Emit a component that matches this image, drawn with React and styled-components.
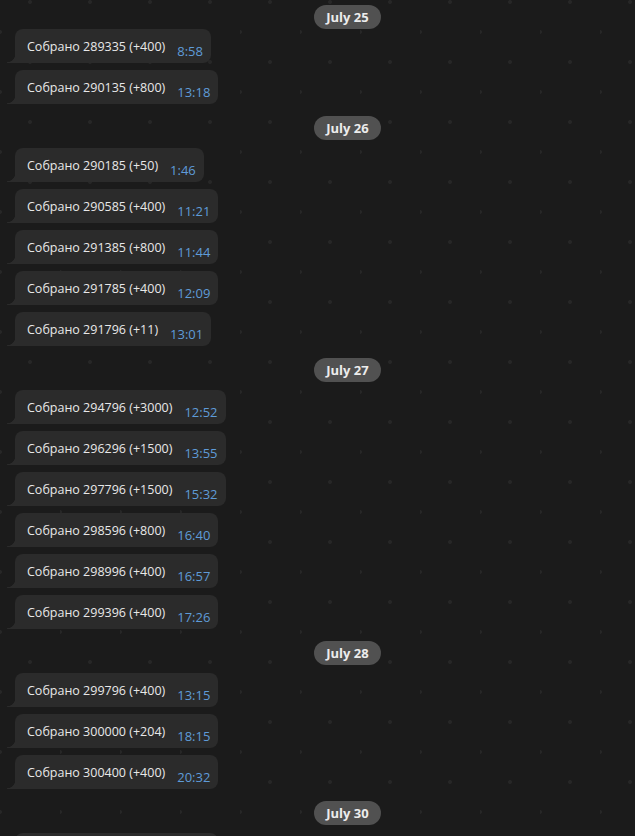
import React from "react";
import styled, { createGlobalStyle } from "styled-components";

const groups = [
    {
        date: "July 25",
        floating: true,
        items: [
            ["289335", "+400", "8:58"],
            ["290135", "+800", "13:18"],
        ],
    },
    {
        date: "July 26",
        items: [
            ["290185", "+50", "1:46"],
            ["290585", "+400", "11:21"],
            ["291385", "+800", "11:44"],
            ["291785", "+400", "12:09"],
            ["291796", "+11", "13:01"],
        ],
    },
    {
        date: "July 27",
        items: [
            ["294796", "+3000", "12:52"],
            ["296296", "+1500", "13:55"],
            ["297796", "+1500", "15:32"],
            ["298596", "+800", "16:40"],
            ["298996", "+400", "16:57"],
            ["299396", "+400", "17:26"],
        ],
    },
    {
        date: "July 28",
        items: [
            ["299796", "+400", "13:15"],
            ["300000", "+204", "18:15"],
            ["300400", "+400", "20:32"],
        ],
    },
    {
        date: "July 30",
        items: [["300800", "+400", "21:10"]],
    },
];

function App() {
    return (
        <>
            <GlobalStyle />
            <Chat>
                {groups.map((g) => (
                    <Group key={g.date}>
                        {g.floating ? (
                            <FloatingDate>
                                <DatePill>{g.date}</DatePill>
                            </FloatingDate>
                        ) : (
                            <DateRow>
                                <DatePill>{g.date}</DatePill>
                            </DateRow>
                        )}
                        {g.items.map(([total, diff, time]) => (
                            <Bubble key={total}>
                                <Text>
                                    Собрано {total} ({diff})
                                </Text>
                                <Time>{time}</Time>
                            </Bubble>
                        ))}
                    </Group>
                ))}
            </Chat>
        </>
    );
}

export default App;

const GlobalStyle = createGlobalStyle`
    html, body {
        margin: 0;
        padding: 0;
        background: #1b1b1b;
        overflow: hidden;
    }
`;

const Chat = styled.div`
    position: relative;
    width: 635px;
    height: 836px;
    overflow: hidden;
    box-sizing: border-box;
    padding-top: 29px;
    background-color: #1b1b1b;
    background-image: radial-gradient(circle at 30px 2px, #272727 1.5px, transparent 2.3px),
        radial-gradient(circle at 0px 32px, #272727 1.5px, transparent 2.3px);
    background-size: 60px 60px;
    font-family: "Open Sans", "Noto Sans", sans-serif;
    display: flex;
    flex-direction: column;
`;

const Group = styled.div`
    display: flex;
    flex-direction: column;
    gap: 7px;
`;

const DateRow = styled.div`
    display: flex;
    justify-content: center;
    padding-left: 60px;
    margin-top: 12px;
    margin-bottom: 1px;
`;

const FloatingDate = styled.div`
    position: absolute;
    top: 5px;
    left: 60px;
    right: 0;
    display: flex;
    justify-content: center;
`;

const DatePill = styled.div`
    height: 24px;
    line-height: 24px;
    padding: 0 12px;
    border-radius: 12px;
    background: #515151;
    color: #ececec;
    font-size: 13px;
    font-weight: 700;
`;

const Bubble = styled.div`
    position: relative;
    align-self: flex-start;
    margin-left: 15px;
    height: 34px;
    box-sizing: border-box;
    padding: 0 8px 0 12px;
    display: flex;
    align-items: center;
    gap: 12px;
    background: #2b2b2b;
    border-radius: 8px 8px 8px 0;

    &::before {
        content: "";
        position: absolute;
        left: -8px;
        bottom: 0;
        width: 8px;
        height: 9px;
        background: radial-gradient(circle at 0 0, transparent 8px, #2b2b2b 8.6px);
    }
`;

const Text = styled.span`
    color: #e8e8e8;
    font-size: 12.5px;
    white-space: nowrap;
`;

const Time = styled.span`
    color: #5f9bd8;
    font-size: 13px;
    margin-top: 10px;
    white-space: nowrap;
`;
